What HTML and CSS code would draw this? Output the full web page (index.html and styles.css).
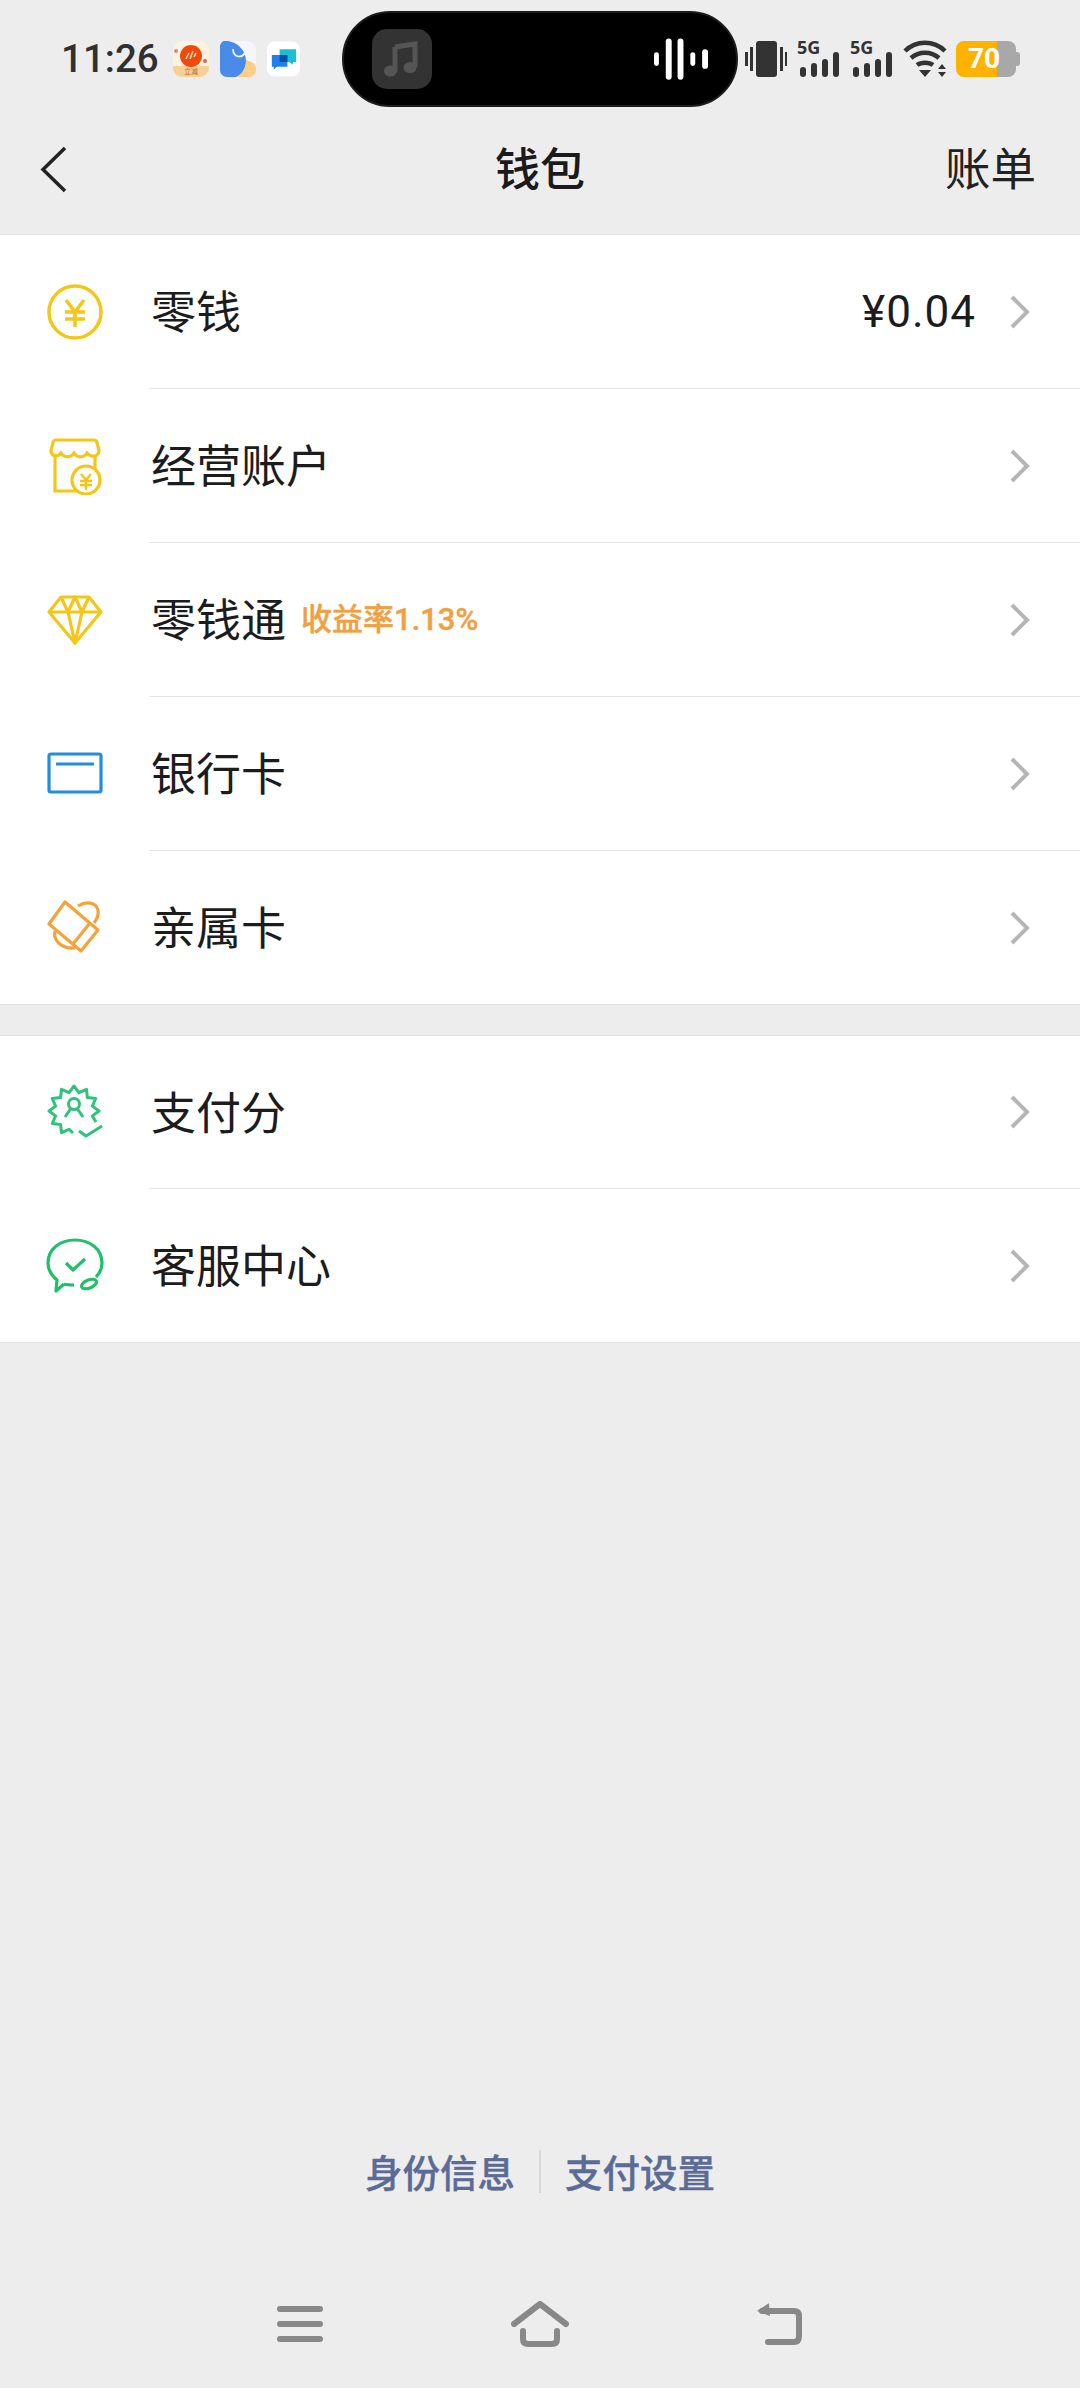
FILE: index.html
```html
<!DOCTYPE html>
<html lang="zh-CN">
<head>
<meta charset="utf-8">
<title>钱包</title>
<link rel="stylesheet" href="styles.css">
</head>
<body>
<div class="page">
  <header class="top">
    <div class="status">
      <div class="status-left">
        <span class="time">11:26</span>
        <svg class="note" viewBox="0 0 36 36"><rect x="0" y="0" width="36" height="36" rx="9" fill="#fdf1df"/><path d="M0 25h36v2a9 9 0 0 1-9 9H9a9 9 0 0 1-9-9z" fill="#f8cf95"/><circle cx="18" cy="15" r="11" fill="#ef4a0e"/><path d="M13 18l3-6M17 18l3-8M21 16l2-4" stroke="#ffd9b0" stroke-width="1.5"/><circle cx="3" cy="10" r="2" fill="#d88a70"/><circle cx="32" cy="20" r="2" fill="#e0654a"/><text x="18" y="33" class="note-text">立减</text></svg>
        <svg class="note" viewBox="0 0 36 36"><rect width="36" height="36" rx="9" fill="#f4f6fa"/><path d="M0 6a6 6 0 0 1 8-6c8 1 18 8 18 20 0 8-6 16-10 16H7a7 7 0 0 1-7-7z" fill="#4a8bea"/><path d="M26 19c4 1 10 3 10 8v2a7 7 0 0 1-7 7H16c6-3 11-9 10-17z" fill="#f9cf85"/><path d="M13 8c0 8 8 10 12 4" fill="none" stroke="#fff" stroke-width="1.6"/></svg>
        <svg class="note note-small" viewBox="0 0 34 36"><rect width="34" height="36" rx="8" fill="#fff"/><path d="M13 8h17v13h-3l-1 3-3-3h-10z" fill="#1cc0d6"/><path d="M5 14h16v12H10l-3 3v-3H5z" fill="#1e80ef"/><rect x="13" y="14" width="8" height="7" fill="#0b4fa6"/></svg>
      </div>
      <div class="pill">
        <span class="pill-app">
          <svg class="pill-note" viewBox="0 0 40 40"><path d="M13 8l20-3v23" fill="none" stroke="#555" stroke-width="5"/><path d="M13 8v25" stroke="#555" stroke-width="5"/><ellipse cx="8.500" cy="32" rx="6.500" ry="5.500" fill="#555"/><ellipse cx="28" cy="28.500" rx="6.500" ry="5.500" fill="#555"/></svg>
        </span>
        <svg class="wave" viewBox="0 0 56 42"><g fill="#fff"><rect x="0" y="14" width="5" height="14" rx="2.500"/><rect x="12" y="0" width="6" height="42" rx="3"/><rect x="24" y="0" width="6" height="42" rx="3"/><rect x="37" y="14" width="5" height="14" rx="2.500"/><rect x="49" y="11" width="6" height="20" rx="3"/></g></svg>
      </div>
      <div class="status-right">
        <svg class="ic-vib" viewBox="0 0 42 38"><g fill="#333"><rect x="11" y="1" width="21" height="36" rx="3"/><rect x="0" y="12" width="3" height="14"/><rect x="5" y="7" width="3" height="24"/><rect x="35" y="7" width="3" height="24"/><rect x="40" y="12" width="2" height="14"/></g></svg>
        <div class="sig"><span class="sig-text">5G</span><svg class="ic-sig" viewBox="0 0 43 38"><g fill="#333"><rect x="3" y="27" width="6" height="10" rx="3"/><rect x="14" y="23" width="6" height="14" rx="3"/><rect x="25" y="19" width="6" height="18" rx="3"/><rect x="36" y="12" width="6" height="25" rx="3"/></g></svg></div>
        <div class="sig"><span class="sig-text">5G</span><svg class="ic-sig" viewBox="0 0 43 38"><g fill="#333"><rect x="3" y="27" width="6" height="10" rx="3"/><rect x="14" y="23" width="6" height="14" rx="3"/><rect x="25" y="19" width="6" height="18" rx="3"/><rect x="36" y="12" width="6" height="25" rx="3"/></g></svg></div>
        <svg class="ic-wifi" viewBox="0 0 44 38"><g fill="none" stroke="#333" stroke-width="4.500"><path d="M2 11c11-11 29-11 40 0"/><path d="M8 18c8-7 20-7 28 0"/><path d="M14 25c4-3 12-3 16 0"/></g><path d="M16 30h12l-6 7z" fill="#333"/><path d="M39 24l4 5h-8zM39 37l4-5h-8z" fill="#333"/></svg>
        <span class="battery"><span class="battery-level">70</span><span class="battery-nub"></span></span>
      </div>
    </div>
    <div class="appbar">
      <svg class="back" viewBox="0 0 27 47"><path d="M25 2L3 23.500 25 45" fill="none" stroke="#222" stroke-width="3.500"/></svg>
      <h1 class="title">钱包</h1>
      <span class="bill">账单</span>
    </div>
  </header>

  <main class="groups">
    <section class="group">
      <div class="row">
        <svg class="row-icon" viewBox="0 0 58 58"><circle cx="29" cy="29" r="26" fill="none" stroke="#f5c518" stroke-width="3.500"/><path d="M20 17l9 12 9-12M19 29h20M19 36h20M29 29v15" fill="none" stroke="#f5c518" stroke-width="3.500"/></svg>
        <div class="row-body"><span class="label">零钱</span><span class="amount">¥0.04</span><svg class="chev" viewBox="0 0 22 36"><path d="M3 3l15 15L3 33" fill="none" stroke="#b5b5b5" stroke-width="4"/></svg></div>
      </div>
      <div class="row">
        <svg class="row-icon" viewBox="0 0 58 58"><g fill="none" stroke="#f5c518" stroke-width="3.200"><path d="M10 3h38a3 3 0 0 1 3 3l2 7c0 7-8 8-12 3-3 5-10 5-13 0-3 5-10 5-13 0-4 5-10 3-10-3l2-7a3 3 0 0 1 3-3z"/><path d="M9 20v34h24M49 20v14"/><circle cx="40" cy="43" r="14" fill="#fff"/></g><path d="M35 37l5 6 5-6M34 44h12M34 48h12M40 43v10" fill="none" stroke="#f5c518" stroke-width="2.400"/></svg>
        <div class="row-body"><span class="label">经营账户</span><svg class="chev" viewBox="0 0 22 36"><path d="M3 3l15 15L3 33" fill="none" stroke="#b5b5b5" stroke-width="4"/></svg></div>
      </div>
      <div class="row">
        <svg class="row-icon" viewBox="0 0 58 58"><g fill="none" stroke="#f5c518" stroke-width="3.200" stroke-linejoin="round"><path d="M15 6h28l12 15-26 31L3 21z"/><path d="M3 21h52M22 21l7 31 7-31M15 6l7 15 7-15 7 15 7-15"/></g></svg>
        <div class="row-body"><span class="label">零钱通</span><span class="rate">收益率1.13%</span><svg class="chev" viewBox="0 0 22 36"><path d="M3 3l15 15L3 33" fill="none" stroke="#b5b5b5" stroke-width="4"/></svg></div>
      </div>
      <div class="row">
        <svg class="row-icon" viewBox="0 0 58 58"><rect x="3" y="9" width="52" height="38" rx="2" fill="none" stroke="#1f8ee0" stroke-width="3.200"/><path d="M10 19h38" stroke="#1f8ee0" stroke-width="3.200"/></svg>
        <div class="row-body"><span class="label">银行卡</span><svg class="chev" viewBox="0 0 22 36"><path d="M3 3l15 15L3 33" fill="none" stroke="#b5b5b5" stroke-width="4"/></svg></div>
      </div>
      <div class="row row-last">
        <svg class="row-icon" viewBox="0 0 58 58"><g fill="none" stroke="#f2a33c" stroke-width="3.200" stroke-linejoin="round"><path d="M19 3L52 31 35 52 3 25z"/><path d="M44 24L27 45"/><path d="M32 7c8-5 18-4 20 4 1 5-1 9-4 13"/><path d="M9 32c-2 9 6 18 20 17"/></g></svg>
        <div class="row-body"><span class="label">亲属卡</span><svg class="chev" viewBox="0 0 22 36"><path d="M3 3l15 15L3 33" fill="none" stroke="#b5b5b5" stroke-width="4"/></svg></div>
      </div>
    </section>
    <section class="group">
      <div class="row">
        <svg class="row-icon" viewBox="0 0 58 58"><g fill="none" stroke="#2fc27a" stroke-width="3" stroke-linejoin="round"><path d="M27 49L23.100 45.400 15.500 48.700 14.600 40.400 6.300 39.500 9.600 31.900 3 27 9.600 22.100 6.300 14.500 14.600 13.600 15.500 5.300 23.100 8.600 28 2 32.900 8.600 40.500 5.300 41.400 13.600 49.700 14.500 46.400 22.100 53 27 46.400 31.900 50 38"/><circle cx="28" cy="20" r="5.500"/><path d="M24.500 25L19 33M31.500 25L37 33"/><path d="M33 47l7 5 16-10"/></g></svg>
        <div class="row-body"><span class="label">支付分</span><svg class="chev" viewBox="0 0 22 36"><path d="M3 3l15 15L3 33" fill="none" stroke="#b5b5b5" stroke-width="4"/></svg></div>
      </div>
      <div class="row row-last">
        <svg class="row-icon" viewBox="0 0 58 58"><g fill="none" stroke="#1fc06a" stroke-width="3.200" stroke-linejoin="round"><path d="M18 47l-8 7 1-11C5 38 2 31 2 26 2 12 14 3 29 3s27 9 27 23c0 5-2 10-6 14"/><path d="M18 47c3 1 7 1 10 1"/><path d="M20 26l7 7 12-11"/><ellipse cx="43" cy="47" rx="8" ry="4" transform="rotate(-22 43 47)"/></g></svg>
        <div class="row-body"><span class="label">客服中心</span><svg class="chev" viewBox="0 0 22 36"><path d="M3 3l15 15L3 33" fill="none" stroke="#b5b5b5" stroke-width="4"/></svg></div>
      </div>
    </section>
  </main>

  <footer class="foot">
    <div class="links"><a class="link">身份信息</a><span class="link-sep"></span><a class="link">支付设置</a></div>
    <nav class="nav">
      <span class="nav-cell"><svg class="nav-menu" viewBox="0 0 46 38"><g fill="none" stroke="#888" stroke-width="6" stroke-linecap="round"><path d="M3 4h40M3 19h40M3 34h40"/></g></svg></span>
      <span class="nav-cell"><svg class="nav-home" viewBox="0 0 58 46"><g fill="none" stroke="#888" stroke-width="6" stroke-linecap="round" stroke-linejoin="round"><path d="M3 23L29 3l26 20"/><path d="M12 30v8q0 5 5 5h24q5 0 5-5v-8"/></g></svg></span>
      <span class="nav-cell"><svg class="nav-ret" viewBox="0 0 48 44"><g fill="none" stroke="#888" stroke-width="6" stroke-linecap="round" stroke-linejoin="round"><path d="M8 9h32q5 0 5 5v20q0 6-5 6H14"/></g><path d="M3 9L15 1l1 13z" fill="#888"/></svg></span>
    </nav>
  </footer>
</div>
</body>
</html>
```
FILE: styles.css
```css
* { box-sizing: border-box; }
html, body { margin: 0; padding: 0; }
body { font-family: "Noto Sans CJK SC", "Noto Sans", sans-serif; color: #1a1a1a; background: #ededed; }
.page { width: 1080px; height: 2388px; display: flex; flex-direction: column; background: #ededed; }

.top { height: 235px; border-bottom: 1px solid #e0e0e0; }
.status { height: 118px; display: grid; grid-template-columns: 1fr 396px 1fr; align-items: center; }
.status-left { display: flex; align-items: center; padding-left: 61px; }
.time { font: 500 38.500px/1 Roboto, sans-serif; color: #303030; width: 112px; }
.note { width: 36px; height: 36px; margin-right: 11px; }
.note-small { width: 33px; }
.note-text { font: 7px "Noto Sans CJK SC", sans-serif; fill: #b36a30; text-anchor: middle; }

.pill { height: 96px; border-radius: 48px; background: #000; border: 2px solid #1c1c1c; display: flex; align-items: center; justify-content: space-between; padding: 0 27px 0 28px; }
.pill-app { width: 60px; height: 60px; border-radius: 15px; background: #333; display: flex; align-items: center; justify-content: center; }
.pill-note { width: 40px; height: 40px; }
.wave { width: 55px; height: 42px; }

.status-right { display: flex; align-items: center; padding-left: 7px; }
.ic-vib { width: 42px; height: 38px; margin-right: 10px; }
.sig { position: relative; width: 43px; height: 38px; margin-right: 10px; }
.ic-sig { display: block; width: 43px; height: 38px; }
.sig-text { position: absolute; left: 0; top: -3px; font: 700 18px/20px "Noto Sans", sans-serif; color: #333; }
.ic-wifi { width: 44px; height: 38px; margin-right: 9px; }
.battery { position: relative; width: 60px; height: 36px; border-radius: 8px; background: linear-gradient(90deg, #ffb300 0 68%, #a8a8a8 68% 100%); display: block; }
.battery-level { display: block; font: 700 28px/36px Roboto, sans-serif; color: #fff; padding-left: 12px; }
.battery-nub { position: absolute; left: 60px; top: 11px; width: 4px; height: 14px; border-radius: 0 3px 3px 0; background: #a8a8a8; }

.appbar { position: relative; height: 102px; display: flex; align-items: center; justify-content: space-between; padding: 0 44px 0 40px; }
.back { width: 27px; height: 47px; }
.title { position: absolute; left: 0; right: 0; margin: 0; padding-bottom: 5px; text-align: center; font-size: 45px; font-weight: 500; line-height: 60px; color: #1a1a1a; }
.bill { font-size: 45.500px; line-height: 60px; color: #222; margin-bottom: 6px; }

.groups { display: flex; flex-direction: column; gap: 30px; }
.group { background: #fff; border-bottom: 1px solid #e0e0e0; }
.group + .group { border-top: 1px solid #e0e0e0; }
.group + .group .row { height: 153px; }
.row { display: flex; align-items: center; height: 154px; padding-left: 46px; }
.row-last { height: 153px; }
.row-icon { width: 58px; height: 58px; margin-right: 45px; flex: none; }
.row-body { flex: 1; height: 100%; display: flex; align-items: center; border-bottom: 1px solid #e6e6e6; padding: 0 49px 0 2px; }
.row-last .row-body { border-bottom: 0; }
.label { font-size: 45px; line-height: 60px; color: #1c1c1c; flex: none; margin-bottom: 3px; }
.amount { margin-left: auto; font: 400 44px/60px Roboto, sans-serif; color: #1c1c1c; letter-spacing: 1px; }
.rate { margin-left: 15px; font-family: Roboto, "Noto Sans CJK SC", sans-serif; font-size: 31px; font-weight: 500; -webkit-text-stroke: 0.4px #f0a040; line-height: 44px; color: #f0a040; white-space: nowrap; }
.chev { width: 22px; height: 36px; margin-left: auto; flex: none; }
.amount + .chev { margin-left: 33px; }

.foot { margin-top: auto; }
.links { display: flex; align-items: center; justify-content: center; height: 44px; }
.link { font-size: 37.500px; font-weight: 500; -webkit-text-stroke: 0.4px #5a6b96; line-height: 44px; color: #5a6b96; }
.link-sep { width: 2px; height: 43px; background: #d6d6d6; margin: 0 24px; }
.nav { display: flex; justify-content: center; align-items: center; height: 46px; margin: 108px 0 41px; }
.nav-cell { width: 240px; display: flex; justify-content: center; }
.nav-menu { width: 46px; height: 38px; }
.nav-home { width: 58px; height: 46px; }
.nav-ret { width: 48px; height: 44px; margin-right: 4px; }
```
